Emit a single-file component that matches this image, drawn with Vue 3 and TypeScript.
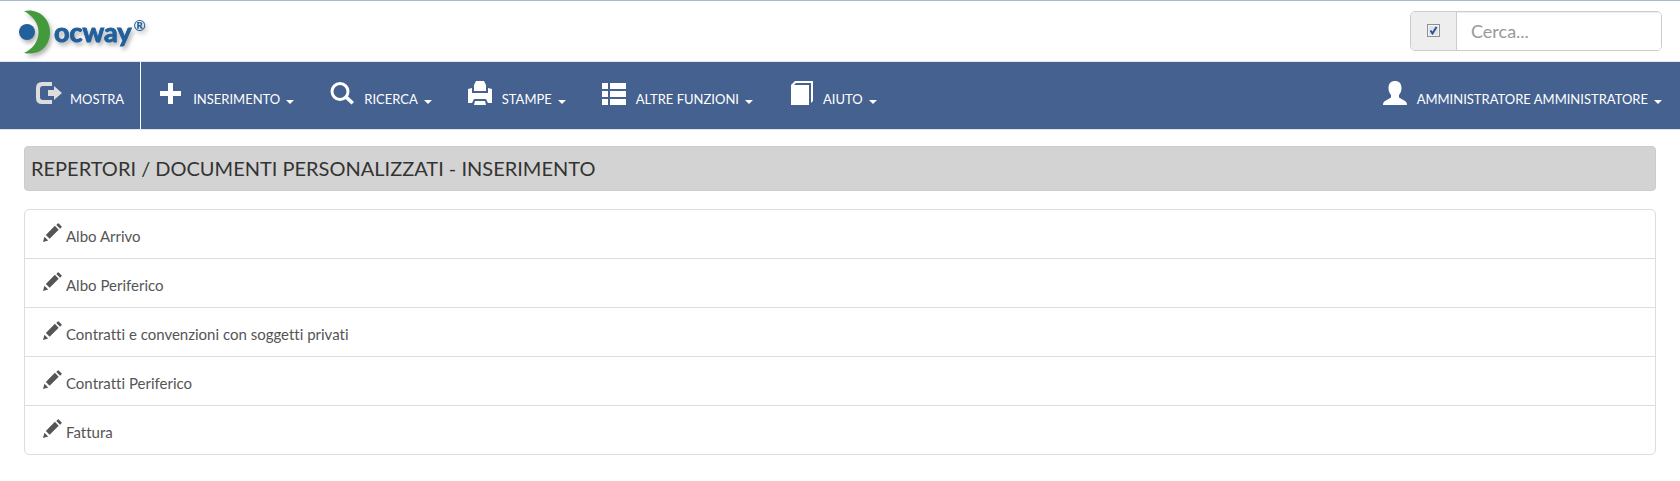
<script setup lang="ts">
interface NavItem {
  id: string
  label: string
}

const menus: NavItem[] = [
  { id: 'plus', label: 'INSERIMENTO' },
  { id: 'search', label: 'RICERCA' },
  { id: 'print', label: 'STAMPE' },
  { id: 'list', label: 'ALTRE FUNZIONI' },
  { id: 'book', label: 'AIUTO' },
]

const paths: Record<string, string> = {
  plus: 'M9 2h5v8h8v5h-8v8h-5v-8H1v-5h8z',
  search:
    'M10 1a9.5 9.5 0 1 1 0 19a9.5 9.5 0 0 1 0-19zm0 3a6.500 6.500 0 1 0 0 13a6.500 6.500 0 0 0 0-13zM14.500 17l2.500-2.500l7 6.500l-2.500 2.500z',
  print:
    'M8 0h8l2 4v6H6V4zM0 8l4-1v5h16V7l4 1v14h-4l-2-4H6l-2 4H0zM7 20h10l1 4H6z',
  list: 'M0 2h6v6H0zM8 2h16v6H8zM0 10h6v6H0zM8 10h16v6H8zM0 18h6v6H0zM8 18h16v6H8z',
  book: 'M2 4h18v20H2zM2 4L6 0h18v20l-2 2V2H7L5 4z',
  user: 'M12 0c4 0 6.500 2.500 6.500 7c0 3-1 5-2.500 7v2.500l6 3.500c1.500 1 2 2 2 4H0c0-2 .5-3 2-4l6-3.500V14c-1.500-2-2.500-4-2.500-7C5.500 2.500 8 0 12 0z',
}

const entries: string[] = [
  'Albo Arrivo',
  'Albo Periferico',
  'Contratti e convenzioni con soggetti privati',
  'Contratti Periferico',
  'Fattura',
]
</script>

<template>
  <div class="page">
    <header class="top">
      <a class="logo" href="#" aria-label="Docway">
        <svg class="mark" viewBox="0 0 34 48" aria-hidden="true">
          <path d="M6 2C20-1 32 9 32 23S22 47 6 44C15 40 20.500 32 20.500 23S15 7 6 2z" fill="#43993c" />
          <circle cx="9" cy="23" r="8" fill="#22609c" />
        </svg>
        <span class="word">ocway</span><span class="reg">®</span>
      </a>
      <form class="search" @submit.prevent>
        <label class="addon"><input type="checkbox" checked aria-label="Opzioni di ricerca" /></label>
        <input class="query" type="text" placeholder="Cerca..." aria-label="Cerca" />
      </form>
    </header>

    <nav class="bar">
      <a class="item mostra" href="#">
        <svg class="exit" viewBox="0 0 26 24" aria-hidden="true">
          <path d="M16 1v4H7Q4 5 4 8v8q0 3 3 3h9v4H6q-6 0-6-6V7q0-6 6-6zM12 9h6V5l8 7l-8 7v-4h-6z" />
        </svg>
        <span>MOSTRA</span>
      </a>
      <button v-for="m in menus" :key="m.id" class="item" type="button">
        <svg class="icon" viewBox="0 0 24 24" aria-hidden="true"><path :d="paths[m.id]" /></svg>
        <span>{{ m.label }}</span>
        <i class="caret"></i>
      </button>
      <button class="item user" type="button">
        <svg class="icon" viewBox="0 0 24 24" aria-hidden="true"><path :d="paths.user" /></svg>
        <span>AMMINISTRATORE AMMINISTRATORE</span>
        <i class="caret"></i>
      </button>
    </nav>

    <main class="content">
      <h1>REPERTORI / DOCUMENTI PERSONALIZZATI - INSERIMENTO</h1>
      <ul class="list">
        <li v-for="e in entries" :key="e">
          <a href="#">
            <svg class="pencil" viewBox="0 0 20 20" aria-hidden="true">
              <path d="M0 20l1.500-5.500l4 4zM3 12.500L12.500 3l4 4L7 16.500zM14 2l1.500-1.500q.5-.5 1 0l3 3q.5.5 0 1L18 6z" />
            </svg>
            <span>{{ e }}</span>
          </a>
        </li>
      </ul>
    </main>
  </div>
</template>

<style>
body {
  margin: 0;
  background: #fff;
}
</style>

<style scoped>
.page {
  font-family: Lato, 'Open Sans', sans-serif;
  font-size: 15px;
  color: #555;
  border-top: 1px solid #a9b9d1;
  font-variant-ligatures: none;
}
.top {
  display: flex;
  justify-content: space-between;
  align-items: flex-start;
  height: 60px;
  padding: 0 18px;
}
.logo {
  display: flex;
  align-items: flex-start;
  padding-top: 8px;
  color: #22609c;
  text-decoration: none;
  filter: drop-shadow(2px 3px 2px rgba(0, 0, 0, 0.3));
}
.mark {
  width: 34px;
  height: 48px;
}
.word {
  font-size: 27px;
  line-height: 46px;
  font-weight: 700;
  margin-left: 2px;
  -webkit-text-stroke: 1px #22609c;
  stroke-linejoin: round;
}
.reg {
  font-size: 15px;
  line-height: 32px;
  font-weight: 700;
  margin-left: 2px;
}
.search {
  display: flex;
  box-sizing: border-box;
  width: 252px;
  height: 40px;
  margin-top: 10px;
  border: 1px solid #ccc;
  border-radius: 5px;
  overflow: hidden;
}
.addon {
  flex: none;
  display: flex;
  justify-content: center;
  width: 45px;
  background: #eee;
  border-right: 1px solid #ccc;
}
.addon input {
  appearance: none;
  box-sizing: border-box;
  width: 13px;
  height: 13px;
  margin: 12px 0 0;
  border: 1px solid #8e8f8f;
  background: #dfe3ea
    url("data:image/svg+xml,%3Csvg xmlns='http://www.w3.org/2000/svg' viewBox='0 0 11 11'%3E%3Cpath d='M2.500 5.500L4.500 8.500L8.500 2' fill='none' stroke='%23354f96' stroke-width='2'/%3E%3C/svg%3E");
  box-shadow: inset 0 0 0 1px #f4f4f4;
}
.query {
  flex: 1;
  min-width: 0;
  border: 0;
  outline: 0;
  padding: 0 14px;
  font: inherit;
  font-size: 18px;
  color: #555;
  background: #fff;
  box-shadow: inset 0 1px 1px rgba(0, 0, 0, 0.075);
}
.query::placeholder {
  color: #999;
  opacity: 1;
}
.bar {
  display: flex;
  font-size: 13px;
  background: #456190;
  border-top: 1px solid #e0e5ed;
  border-bottom: 1px solid #e0e5ed;
}
.item {
  display: flex;
  align-items: flex-end;
  height: 67px;
  box-sizing: border-box;
  padding: 0 18px 24px;
  border: 0;
  background: none;
  font: inherit;
  line-height: 20px;
  color: #fff;
  text-decoration: none;
  white-space: nowrap;
}
.item span {
  margin: 0 6px -4px 10px;
}
.icon {
  width: 24px;
  height: 24px;
  fill: currentColor;
}
.exit {
  width: 26px;
  height: 24px;
  fill: #ddd;
}
.mostra {
  padding-left: 36px;
  padding-right: 16px;
  border-right: 1px solid #fff;
}
.mostra span {
  margin: 0 0 -4px 8px;
}
.user {
  margin-left: auto;
}
.caret {
  margin-bottom: 1px;
  border-top: 4px solid #fff;
  border-left: 4px solid transparent;
  border-right: 4px solid transparent;
}
.content {
  padding: 16px 24px 24px;
}
h1 {
  margin: 0 0 18px;
  padding: 0 6px;
  border: 1px solid #ccc;
  border-radius: 4px;
  background: #d3d3d3;
  color: #333;
  font-size: 20px;
  line-height: 43px;
  font-weight: 400;
}
.list {
  list-style: none;
  margin: 0;
  padding: 0;
  border: 1px solid #ddd;
  border-radius: 5px;
}
.list li + li {
  border-top: 1px solid #ddd;
}
.list a {
  display: flex;
  align-items: flex-start;
  gap: 4px;
  height: 48px;
  box-sizing: border-box;
  padding: 13px 18px 0;
  color: #555;
  text-decoration: none;
}
.list span {
  line-height: 20px;
  padding-top: 3px;
}
.pencil {
  width: 19px;
  height: 19px;
  fill: #555;
}
</style>
